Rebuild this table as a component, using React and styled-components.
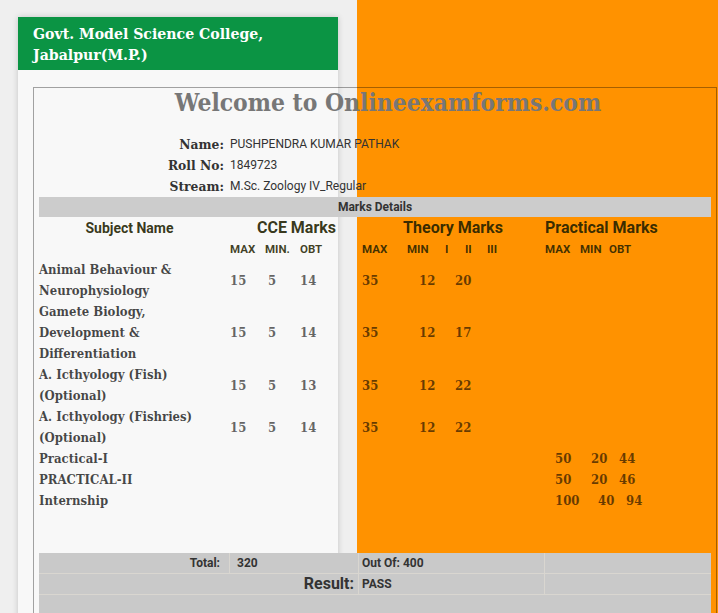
import React from 'react';
import styled, { createGlobalStyle } from 'styled-components';

const GlobalStyle = createGlobalStyle`
  html, body {
    margin: 0;
    padding: 0;
    overflow: hidden;
  }
  body {
    font-family: Roboto, "Liberation Sans", sans-serif;
  }
`;

const serif = `"DejaVu Serif Condensed", "DejaVu Serif", "Liberation Serif", serif`;

const Page = styled.div`
  min-height: 100vh;
  box-sizing: border-box;
  padding: 17px 0 0 18px;
  background: linear-gradient(to right, #efefef 357px, #ff9200 357px);
`;

const Card = styled.div`
  width: 320px;
  min-height: calc(100vh - 17px);
  background: #f8f8f8;
  box-shadow: 0 0 6px rgba(0, 0, 0, 0.18);
`;

const CollegeHeader = styled.h1`
  margin: 0;
  padding: 6px 15px 5px;
  background: #0b9444;
  color: #fff;
  font-family: ${serif};
  font-size: 15.7px;
  line-height: 21px;
  font-weight: bold;
`;

const ResultBox = styled.div`
  margin: 17px 0 0 15px;
  width: 684px;
  box-sizing: border-box;
  padding: 0 5px 40px;
  border: 1px solid rgba(0, 0, 0, 0.35);
  border-bottom: none;
`;

const Welcome = styled.h2`
  margin: 0;
  padding-left: 26px;
  text-align: center;
  font-family: ${serif};
  font-size: 24.4px;
  line-height: 29px;
  color: #777;
`;

const InfoGrid = styled.div`
  display: grid;
  grid-template-columns: 185px 1fr;
  column-gap: 6px;
  margin-top: 16px;
  grid-auto-rows: 21px;
  align-items: center;
`;

const InfoLabel = styled.span`
  text-align: right;
  font-family: ${serif};
  font-weight: bold;
  font-size: 13.7px;
  color: #333;
`;

const InfoValue = styled.span`
  font-size: 12px;
  color: #333;
`;

const SectionBar = styled.div`
  margin-top: 1px;
  height: 20px;
  line-height: 20px;
  background: #cccccc;
  text-align: center;
  font-size: 12px;
  font-weight: bold;
  color: #333;
`;

const MarksGrid = styled.div`
  display: grid;
  grid-template-columns: 190px 129px 184px 169px;
`;

const HeadCell = styled.div`
  display: flex;
  flex-direction: column;
  align-items: ${(p) => (p.$left ? 'flex-start' : 'center')};
  padding-left: ${(p) => p.$pad || 0}px;
  padding-right: ${(p) => p.$padRight || 0}px;
`;

const HeadTitle = styled.div`
  height: 22px;
  line-height: 22px;
  font-weight: bold;
  font-size: ${(p) => p.$size || 16}px;
  color: rgba(30, 30, 0, 0.9);
  white-space: nowrap;
`;

const SubRow = styled.div`
  display: flex;
  align-self: stretch;
  height: 20px;
  line-height: 20px;
  margin-left: ${(p) => p.$shift || 0}px;
`;

const SubLabel = styled.span`
  display: inline-block;
  width: ${(p) => (p.$w ? `${p.$w}px` : 'auto')};
  font-size: 11.5px;
  font-weight: bold;
  color: rgba(30, 30, 0, 0.85);
  white-space: nowrap;
`;

const Subject = styled.div`
  font-family: ${serif};
  font-weight: bold;
  font-size: 13px;
  line-height: 21px;
  color: rgba(0, 0, 0, 0.72);
  white-space: nowrap;
`;

const NumCell = styled.div`
  display: flex;
  align-items: center;
  padding-left: ${(p) => p.$pad}px;
`;

const Num = styled.span`
  display: inline-block;
  width: ${(p) => (p.$w ? `${p.$w}px` : 'auto')};
  font-family: ${serif};
  font-weight: bold;
  font-size: 13px;
  color: rgba(0, 0, 0, 0.6);
`;

const Summary = styled.div`
  margin-top: 42px;
  display: flex;
  flex-direction: column;
  gap: 1px;
  background: #d9d6d0;
`;

const SumRow = styled.div`
  display: grid;
  grid-template-columns: 190px 128px 185px 1fr;
  gap: 1px;
  height: 20px;
`;

const SumCell = styled.div`
  grid-column: ${(p) => p.$span || 'auto'};
  background: #c9c9c9;
  text-align: ${(p) => (p.$right ? 'right' : 'left')};
  padding: ${(p) => (p.$right ? `0 ${p.$pad}px 0 0` : `0 0 0 ${p.$pad || 0}px`)};
  font-size: ${(p) => p.$size || 12}px;
  line-height: 20px;
  font-weight: bold;
  color: #333;
`;

const NumGroup = ({ pad, values, widths }) => (
  <NumCell $pad={pad}>
    {values.map((v, i) => (
      <Num key={i} $w={widths[i]}>
        {v}
      </Num>
    ))}
  </NumCell>
);

const subjects = [
  { lines: ['Animal Behaviour &', 'Neurophysiology'], cce: ['15', '5', '14'], theory: ['35', '12', '20'] },
  { lines: ['Gamete Biology,', 'Development &', 'Differentiation'], cce: ['15', '5', '14'], theory: ['35', '12', '17'] },
  { lines: ['A. Icthyology (Fish)', '(Optional)'], cce: ['15', '5', '13'], theory: ['35', '12', '22'] },
  { lines: ['A. Icthyology (Fishries)', '(Optional)'], cce: ['15', '5', '14'], theory: ['35', '12', '22'] },
  { lines: ['Practical-I'], practical: ['50', '20', '44'], pw: [36, 28] },
  { lines: ['PRACTICAL-II'], practical: ['50', '20', '46'], pw: [36, 28] },
  { lines: ['Internship'], practical: ['100', '40', '94'], pw: [43, 28] },
];

export default function App() {
  return (
    <>
      <GlobalStyle />
      <Page>
        <Card>
          <CollegeHeader>
            Govt. Model Science College,
            <br />
            Jabalpur(M.P.)
          </CollegeHeader>
          <ResultBox>
            <Welcome>Welcome to Onlineexamforms.com</Welcome>
            <InfoGrid>
              <InfoLabel>Name:</InfoLabel>
              <InfoValue>PUSHPENDRA KUMAR PATHAK</InfoValue>
              <InfoLabel>Roll No:</InfoLabel>
              <InfoValue>1849723</InfoValue>
              <InfoLabel>Stream:</InfoLabel>
              <InfoValue>M.Sc. Zoology IV_Regular</InfoValue>
            </InfoGrid>
            <SectionBar>Marks Details</SectionBar>
            <MarksGrid>
              <HeadCell $padRight={9}>
                <HeadTitle $size={14}>Subject Name</HeadTitle>
              </HeadCell>
              <HeadCell $pad={6}>
                <HeadTitle>CCE Marks</HeadTitle>
                <SubRow $shift={-5}>
                  <SubLabel $w={35}>MAX</SubLabel>
                  <SubLabel $w={35}>MIN.</SubLabel>
                  <SubLabel>OBT</SubLabel>
                </SubRow>
              </HeadCell>
              <HeadCell $pad={6}>
                <HeadTitle>Theory Marks</HeadTitle>
                <SubRow $shift={-2}>
                  <SubLabel $w={45}>MAX</SubLabel>
                  <SubLabel $w={38}>MIN</SubLabel>
                  <SubLabel $w={20}>I</SubLabel>
                  <SubLabel $w={22}>II</SubLabel>
                  <SubLabel>III</SubLabel>
                </SubRow>
              </HeadCell>
              <HeadCell $left $pad={3}>
                <HeadTitle>Practical Marks</HeadTitle>
                <SubRow>
                  <SubLabel $w={35}>MAX</SubLabel>
                  <SubLabel $w={29}>MIN</SubLabel>
                  <SubLabel>OBT</SubLabel>
                </SubRow>
              </HeadCell>

              {subjects.map((s, i) => (
                <React.Fragment key={i}>
                  <Subject>
                    {s.lines.map((l, j) => (
                      <div key={j}>{l}</div>
                    ))}
                  </Subject>
                  {s.cce ? <NumGroup pad={1} values={s.cce} widths={[38, 32]} /> : <div />}
                  {s.theory ? <NumGroup pad={4} values={s.theory} widths={[57, 36]} /> : <div />}
                  {s.practical ? <NumGroup pad={13} values={s.practical} widths={s.pw} /> : <div />}
                </React.Fragment>
              ))}
            </MarksGrid>

            <Summary>
              <SumRow>
                <SumCell $right $pad={9}>Total:</SumCell>
                <SumCell $pad={7}>320</SumCell>
                <SumCell $pad={3}>Out Of: 400</SumCell>
                <SumCell />
              </SumRow>
              <SumRow>
                <SumCell $span="span 2" $right $pad={4} $size={16}>
                  Result:
                </SumCell>
                <SumCell $pad={3}>PASS</SumCell>
                <SumCell />
              </SumRow>
              <SumRow>
                <SumCell $span="span 4" />
              </SumRow>
            </Summary>
          </ResultBox>
        </Card>
      </Page>
    </>
  );
}
